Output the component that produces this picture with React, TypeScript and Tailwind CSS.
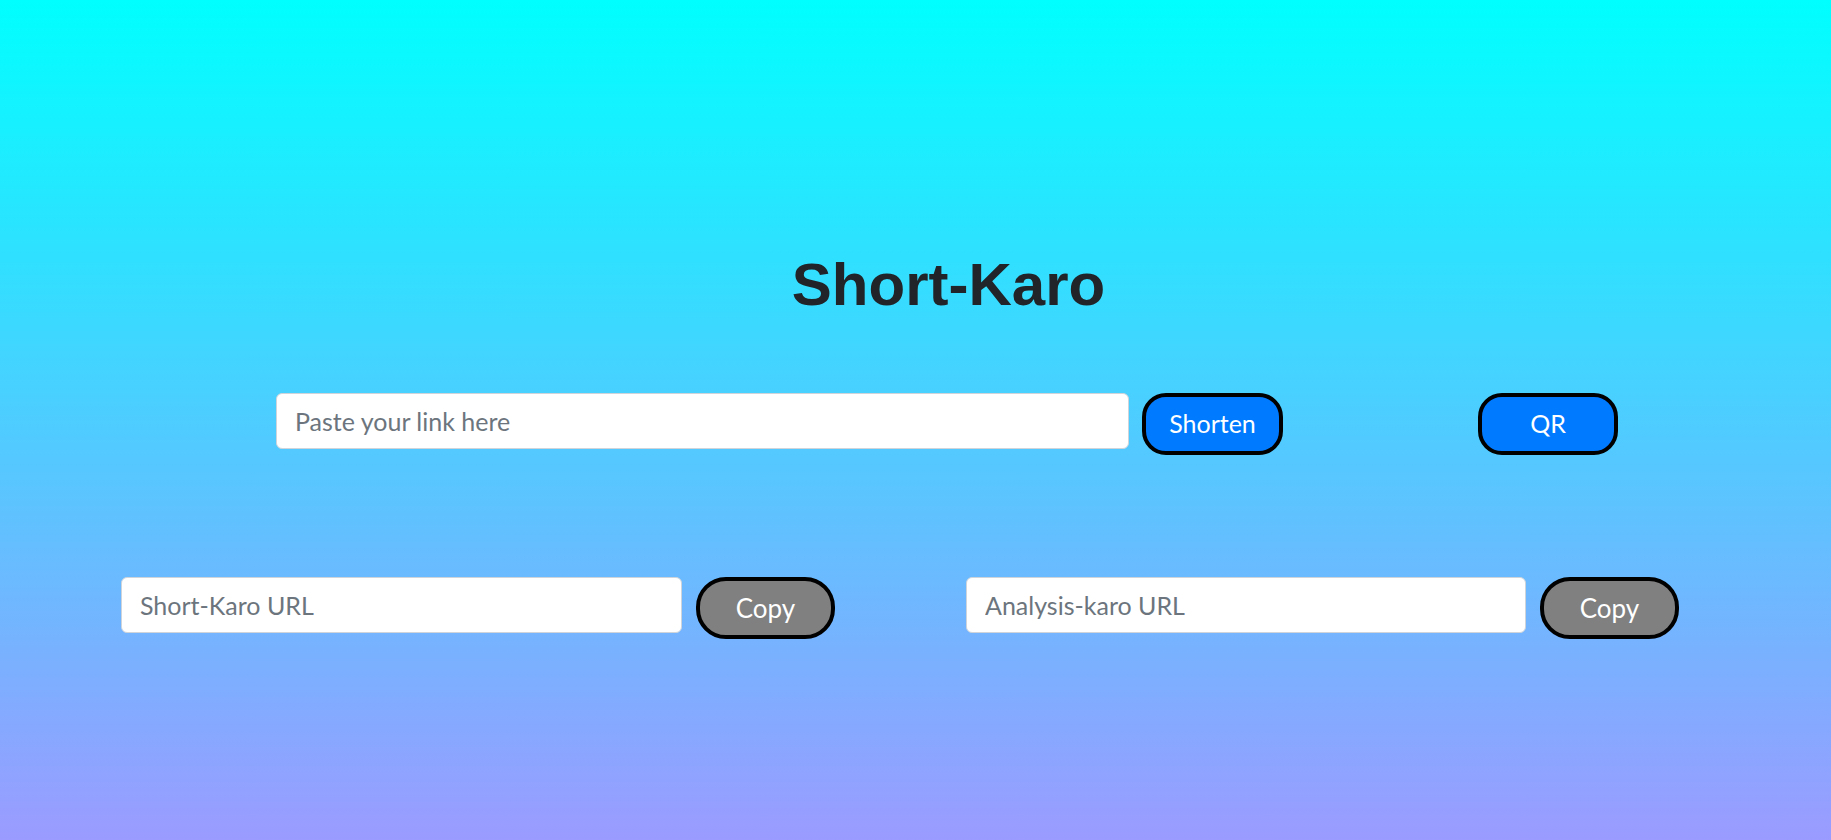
import React from "react";

const font = { fontFamily: "Lato, 'Noto Sans', sans-serif" };

export default function App() {
  return (
    <div className="w-full h-[840px] overflow-hidden bg-[linear-gradient(to_bottom,#00ffff,#9b9bff)]">
      <div className="pt-[249px] pl-[66px] flex justify-center">
        <h1 className="text-[60px] leading-[72px] font-bold text-[#212529] m-0" style={{ fontFamily: "'Liberation Sans', Arial, sans-serif" }}>
          Short-Karo
        </h1>
      </div>
      <div className="mt-[72px] flex items-start pl-[276px]" style={font}>
        <input
          className="w-[853px] h-[56px] bg-white border border-[#ced4da] rounded-[6px] pl-[18px] text-[25px] text-[#212529] placeholder:text-[#6c757d] outline-none"
          placeholder="Paste your link here"
        />
        <button className="ml-[13px] w-[141px] h-[62px] bg-[#007bff] border-[4px] border-black rounded-[24px] text-white text-[25px]">
          Shorten
        </button>
        <button className="ml-[195px] w-[140px] h-[62px] bg-[#007bff] border-[4px] border-black rounded-[24px] text-white text-[25px]">
          QR
        </button>
      </div>
      <div className="mt-[122px] flex items-start pl-[121px]" style={font}>
        <input
          className="w-[561px] h-[56px] bg-white border border-[#ced4da] rounded-[6px] pl-[18px] text-[25px] text-[#212529] placeholder:text-[#6c757d] outline-none"
          placeholder="Short-Karo URL"
        />
        <button className="ml-[14px] w-[139px] h-[62px] bg-[#808080] border-[4px] border-black rounded-[30px] text-white text-[26px]">
          Copy
        </button>
        <input
          className="ml-[131px] w-[560px] h-[56px] bg-white border border-[#ced4da] rounded-[6px] pl-[18px] text-[25px] text-[#212529] placeholder:text-[#6c757d] outline-none"
          placeholder="Analysis-karo URL"
        />
        <button className="ml-[14px] w-[139px] h-[62px] bg-[#808080] border-[4px] border-black rounded-[30px] text-white text-[26px]">
          Copy
        </button>
      </div>
    </div>
  );
}
